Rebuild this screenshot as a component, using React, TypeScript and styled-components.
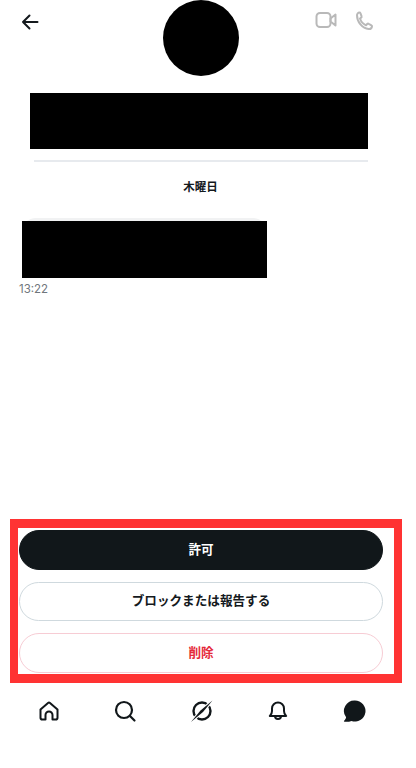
import React from 'react';
import styled, { createGlobalStyle } from 'styled-components';

const GlobalStyle = createGlobalStyle`
  html, body {
    margin: 0;
    padding: 0;
    background: #fff;
  }
  body {
    font-family: "Noto Sans CJK JP", "Noto Sans", sans-serif;
  }
`;

const Screen = styled.div`
  width: 416px;
  height: 768px;
  display: flex;
  flex-direction: column;
  background: #fff;
  overflow: hidden;
`;

const Header = styled.header`
  display: grid;
  grid-template-columns: 142px 76px 1fr;
  padding-left: 21px;
  padding-right: 42px;
`;

const BackButton = styled.div`
  padding-top: 12px;
  height: 18px;
  color: #14191d;
`;

const Avatar = styled.div`
  width: 76px;
  height: 76px;
  border-radius: 50%;
  background: #000;
`;

const CallActions = styled.div`
  display: flex;
  justify-content: flex-end;
  gap: 18px;
  padding-top: 11px;
  color: #b9b9b9;
`;

const NameBlock = styled.div`
  width: 338px;
  height: 56px;
  margin: 17px 0 0 30px;
  background: #000;
`;

const Divider = styled.hr`
  width: 334px;
  height: 2px;
  margin: 11px 0 0 34px;
  border: 0;
  background: #e7eaee;
`;

const DayLabel = styled.div`
  width: 401px;
  margin-top: 15px;
  text-align: center;
  font-size: 11.5px;
  font-weight: 700;
  line-height: 18px;
  color: #14191d;
`;

const Bubble = styled.div`
  width: 245px;
  margin: 23px 0 0 22px;
  padding-top: 3px;
  border-radius: 14px 14px 0 0;
  background: #f1f2f3;
`;

const BubbleBody = styled.div`
  height: 57px;
  background: #000;
`;

const Time = styled.div`
  margin: 4px 0 0 19px;
  font-family: Inter, "Liberation Sans", sans-serif;
  font-size: 11.5px;
  line-height: 14px;
  color: #6f767c;
`;

const Actions = styled.section`
  box-sizing: border-box;
  width: 392px;
  height: 164px;
  margin: auto 0 0 10px;
  padding: 2px 11px 0 1px;
  border: solid #ff3333;
  border-width: 9px 8px;
  display: flex;
  flex-direction: column;
  gap: 12px;
`;

const ActionButton = styled.button<{ $variant: 'primary' | 'neutral' | 'danger' }>`
  box-sizing: border-box;
  width: 100%;
  height: 39.5px;
  flex: none;
  padding: 0 0 3px;
  border-radius: 20px;
  font-family: inherit;
  font-size: 12.6px;
  font-weight: 700;
  border: 1px solid
    ${({ $variant }) =>
      $variant === 'primary' ? '#11171a' : $variant === 'neutral' ? '#cfd9de' : '#f7ccd4'};
  background: ${({ $variant }) => ($variant === 'primary' ? '#11171a' : '#fff')};
  color: ${({ $variant }) =>
    $variant === 'primary' ? '#fff' : $variant === 'neutral' ? '#14191d' : '#e5293a'};
`;

const BottomNav = styled.nav`
  display: grid;
  grid-template-columns: repeat(5, 24px);
  justify-content: space-between;
  height: 85px;
  padding: 16px 50px 0 37px;
  box-sizing: border-box;
  color: #11171a;
`;

const NavItem = styled.div`
  width: 24px;
  height: 24px;
`;

const BackIcon = () => (
  <svg width="18" height="18" viewBox="0 0 18 18" fill="none" stroke="currentColor" strokeWidth="2" strokeLinecap="round" strokeLinejoin="round">
    <path d="M16.5 9H2M8.5 2.5 2 9l6.5 6.5" />
  </svg>
);

const VideoIcon = () => (
  <svg width="22" height="18" viewBox="0 0 22 18" fill="none" stroke="currentColor" strokeWidth="2" strokeLinejoin="round">
    <rect x="1.5" y="2" width="14" height="14" rx="3.5" />
    <path d="M15.5 7.5 20.5 3.5v11l-5-4z" />
  </svg>
);

const PhoneIcon = () => (
  <svg width="19" height="20" viewBox="0 0 19 20" fill="none" stroke="currentColor" strokeWidth="2" strokeLinejoin="round">
    <path d="M2 4.2C2 2.8 3.2 1.5 4.4 1.5c.5 0 .9.3 1.1.8l1.1 3c.2.5 0 1-.4 1.3L5 7.500c.9 3 3.200 5.500 6 6.800l1.200-1.300c.4-.4 1-.5 1.500-.2l2.800 1.500c.4.2.6.7.5 1.200-.3 1.500-1.700 2.700-3.300 2.500C7.300 17.500 2 11 2 4.200z" />
  </svg>
);

const HomeIcon = () => (
  <svg width="24" height="24" viewBox="0 0 24 24" fill="none" stroke="currentColor" strokeWidth="2" strokeLinejoin="round">
    <path d="M3.500 10.500 11 4a1.500 1.500 0 0 1 2 0l7.500 6.500v8.200c0 1-.8 1.800-1.800 1.800H15.500v-4.500a3.500 3.500 0 0 0-7 0v4.500H5.300c-1 0-1.800-.8-1.800-1.800z" />
  </svg>
);

const SearchIcon = () => (
  <svg width="24" height="24" viewBox="0 0 24 24" fill="none" stroke="currentColor" strokeWidth="2.200" strokeLinecap="round">
    <circle cx="11" cy="11" r="8" />
    <path d="m17 17 4.500 4.500" />
  </svg>
);

const ExploreIcon = () => (
  <svg width="24" height="24" viewBox="0 0 24 24" fill="none">
    <circle cx="12" cy="12" r="8.500" stroke="currentColor" strokeWidth="2.400" />
    <path d="M1 23 23 1" stroke="#fff" strokeWidth="3.500" />
    <path d="M1 23 10.500 11.500 22.500 1.500 13 13z" fill="currentColor" />
  </svg>
);

const BellIcon = () => (
  <svg width="24" height="24" viewBox="0 0 24 24" fill="none" stroke="currentColor" strokeWidth="2" strokeLinejoin="round">
    <path d="M3.800 17c1.500-1.200 2.200-2.500 2.200-5V9.500a6 6 0 0 1 12 0V12c0 2.500.7 3.800 2.200 5z" />
    <path d="M9 17a3 3 0 0 0 6 0" />
  </svg>
);

const MessageIcon = () => (
  <svg width="24" height="24" viewBox="0 0 24 24" fill="currentColor">
    <path d="M13 1.500a10.500 10.500 0 1 1-3.500 20.400c-2 .8-4.500 1.100-7 .8-.6 0-.8-.6-.4-1 1.100-1 1.800-2.100 2-3.400A10.500 10.500 0 0 1 13 1.500z" />
  </svg>
);

const App: React.FC = () => {
  return (
    <Screen>
      <GlobalStyle />
      <Header>
        <BackButton>
          <BackIcon />
        </BackButton>
        <Avatar />
        <CallActions>
          <VideoIcon />
          <PhoneIcon />
        </CallActions>
      </Header>
      <NameBlock />
      <Divider />
      <DayLabel>木曜日</DayLabel>
      <Bubble>
        <BubbleBody />
      </Bubble>
      <Time>13:22</Time>
      <Actions>
        <ActionButton $variant="primary">許可</ActionButton>
        <ActionButton $variant="neutral">ブロックまたは報告する</ActionButton>
        <ActionButton $variant="danger">削除</ActionButton>
      </Actions>
      <BottomNav>
        <NavItem><HomeIcon /></NavItem>
        <NavItem><SearchIcon /></NavItem>
        <NavItem><ExploreIcon /></NavItem>
        <NavItem><BellIcon /></NavItem>
        <NavItem><MessageIcon /></NavItem>
      </BottomNav>
    </Screen>
  );
};

export default App;
